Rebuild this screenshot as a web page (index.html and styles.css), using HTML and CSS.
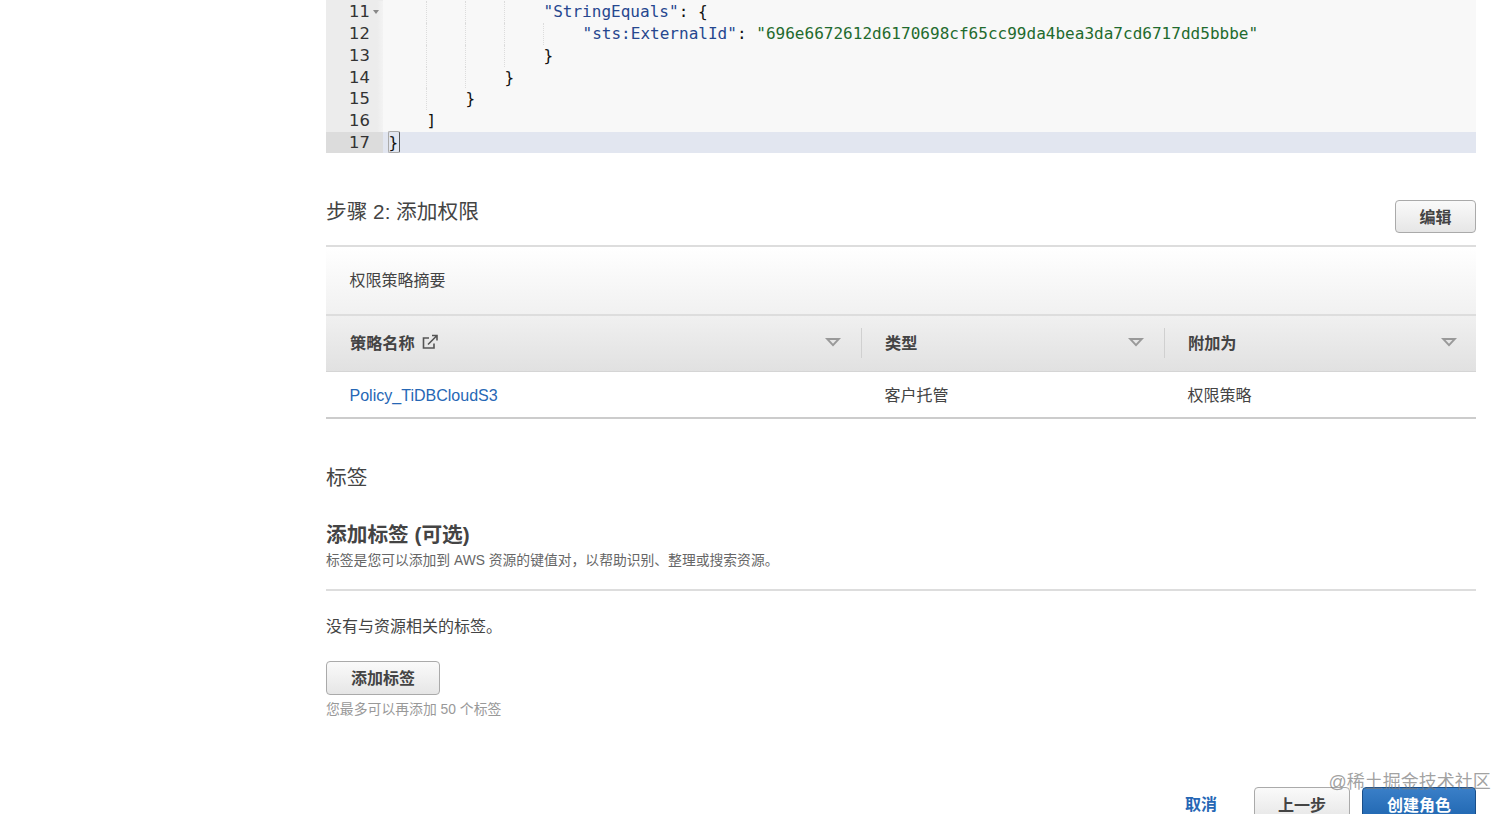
FILE: index.html
```html
<!DOCTYPE html>
<html lang="zh-CN">
<head>
<meta charset="utf-8">
<title>创建角色</title>
<link rel="stylesheet" href="styles.css">
</head>
<body>
<main class="page">
  <div class="editor">
    <div class="line"><div class="gutter">11<i class="fold"></i></div><div class="code"><span class="guide"></span><span class="guide"></span><span class="guide"></span><span class="skip"></span><span class="key">"StringEquals"</span>: {</div></div>
    <div class="line"><div class="gutter">12</div><div class="code"><span class="guide"></span><span class="guide"></span><span class="guide"></span><span class="guide"></span><span class="skip"></span><span class="key">"sts:ExternalId"</span>: <span class="str">"696e6672612d6170698cf65cc99da4bea3da7cd6717dd5bbbe"</span></div></div>
    <div class="line"><div class="gutter">13</div><div class="code"><span class="guide"></span><span class="guide"></span><span class="guide"></span><span class="skip"></span>}</div></div>
    <div class="line"><div class="gutter">14</div><div class="code"><span class="guide"></span><span class="guide"></span><span class="skip"></span>}</div></div>
    <div class="line"><div class="gutter">15</div><div class="code"><span class="guide"></span><span class="skip"></span>}</div></div>
    <div class="line"><div class="gutter">16</div><div class="code"><span class="skip"></span>]</div></div>
    <div class="line active"><div class="gutter">17</div><div class="code"><span class="bracket">}</span></div></div>
  </div>

  <div class="step-head">
    <h2 class="title">步骤 2: 添加权限</h2>
    <button class="btn btn-edit">编辑</button>
  </div>

  <section class="policy">
    <div class="summary">权限策略摘要</div>
    <div class="tr th">
      <div class="cell c1"><span>策略名称</span>
        <svg class="ext" width="16" height="16" viewBox="0 0 16 16" fill="none" stroke="#555" stroke-width="1.6"><path d="M12 9.5V14H1.5V4H7"/><path d="M6 10.5 14.5 2M10 1.5h5v5"/></svg>
        <svg class="sort" width="18" height="10" viewBox="0 0 18 10"><path d="M1 1h16L9 9.5z" fill="#999"/><path d="M5.5 3h7L9 6.8z" fill="#e6e6e6"/></svg>
      </div>
      <div class="cell c2"><span>类型</span>
        <svg class="sort" width="18" height="10" viewBox="0 0 18 10"><path d="M1 1h16L9 9.5z" fill="#999"/><path d="M5.5 3h7L9 6.8z" fill="#e6e6e6"/></svg>
      </div>
      <div class="cell c3"><span>附加为</span>
        <svg class="sort" width="18" height="10" viewBox="0 0 18 10"><path d="M1 1h16L9 9.5z" fill="#999"/><path d="M5.5 3h7L9 6.8z" fill="#e6e6e6"/></svg>
      </div>
    </div>
    <div class="tr td">
      <div class="cell c1"><a class="link" href="#">Policy_TiDBCloudS3</a></div>
      <div class="cell c2">客户托管</div>
      <div class="cell c3">权限策略</div>
    </div>
  </section>

  <h2 class="title tags-title">标签</h2>
  <h3 class="add-title">添加标签 (可选)</h3>
  <p class="desc">标签是您可以添加到 AWS 资源的键值对，以帮助识别、整理或搜索资源。</p>
  <hr class="rule">
  <p class="none">没有与资源相关的标签。</p>
  <button class="btn btn-add">添加标签</button>
  <p class="hint">您最多可以再添加 50 个标签</p>

  <footer class="actions">
    <a class="cancel" href="#">取消</a>
    <button class="btn btn-prev">上一步</button>
    <button class="btn btn-primary">创建角色</button>
  </footer>
</main>
<div class="watermark">@稀土掘金技术社区</div>
</body>
</html>
```

FILE: styles.css
```css
* { box-sizing: border-box; }
html, body { margin: 0; height: 814px; overflow: hidden; background: #fff; }
body {
  position: relative;
  font-family: "Liberation Sans", "Noto Sans CJK SC", sans-serif;
  color: #444;
  font-size: 16px;
}
.page { width: 1150px; margin-left: 326px; }

/* code editor */
.editor { background: #f8f8f8; height: 153px; padding-top: 1px; overflow: hidden; }
.line { display: flex; height: 21.85px; line-height: 21.85px; font-family: "DejaVu Sans Mono", monospace; font-size: 16.05px; }
.line:first-child .gutter { box-shadow: 0 -2px 0 #ececec; }
.gutter { width: 57px; flex: none; background: linear-gradient(90deg, #ececec 90%, #f3f3f3); color: #333; padding-left: 23px; position: relative; font-size: 16.4px; font-family: "DejaVu Sans", sans-serif; }
.fold { position: absolute; left: 47px; top: 9px; border: 3.5px solid transparent; border-top: 4px solid #888; border-bottom: 0; }
.code { flex: 1; padding-left: 4.5px; white-space: pre; color: #111; height: 100%; display: flex; }
.guide { width: 39px; flex: none; height: 100%; border-right: 1px dotted #dcdcdc; }
.skip { width: 39px; flex: none; }
.key { color: #26478f; }
.str { color: #1f6b2e; }
.active { background: #e2e6f0; }
.active .gutter { background: #dcdcdc; }
.bracket { display: block; width: 12px; height: 22px; border: 1px solid #aaa; border-right: 1.5px solid #555; border-radius: 2px; margin-top: -1px; line-height: 21px; }

/* headings */
.title { margin: 0; font-size: 20.7px; font-weight: 400; color: #444; line-height: 28px; }
.step-head { display: flex; justify-content: space-between; align-items: flex-start; margin-top: 47px; padding-bottom: 12px; border-bottom: 2px solid #ddd; }
.step-head .title { margin-top: -2px; }

/* buttons */
.btn {
  font: 700 16px "Liberation Sans", "Noto Sans CJK SC", sans-serif;
  color: #444;
  border: 1px solid #aaa;
  border-radius: 4px;
  background: linear-gradient(#fafafa, #e6e6e6);
  padding: 0;
}
.btn-edit { width: 81px; height: 33px; padding-bottom: 2px; }
.btn-add { display: block; width: 114px; height: 34px; margin-top: 22px; padding-bottom: 2px; }
.btn-prev { width: 96px; height: 34px; margin-left: 37px; }
.btn-primary { width: 114px; height: 34px; margin-left: 12px; color: #fff; background: linear-gradient(#3a7fc8, #1f66b0); border-color: #1a4f8a; }

/* policy table */
.summary { height: 67px; padding-left: 23.5px; line-height: 68px; background: linear-gradient(#fff, #f1f1f1); }
.tr { display: flex; }
.th { height: 58px; border-top: 2px solid #ddd; background: linear-gradient(#f0f0f0, #e1e1e1); font-weight: 700; font-size: 16.2px; align-items: center; padding-bottom: 2px; border-bottom: 1px solid #d5d5d5; }
.th .cell { height: 30px; padding-bottom: 2px; }
.td { height: 47px; border-bottom: 2px solid #ccc; }
.cell { display: flex; align-items: center; position: relative; padding-left: 23px; }
.td .cell { padding-bottom: 1px; }
.td .c1 { padding-bottom: 0; padding-top: 1px; padding-left: 23.5px; font-size: 16.05px; }
.c1 { width: 535px; }
.c2 { width: 303px; }
.c3 { width: 312px; }
.th .c1 { padding-left: 24px; }
.th .c2, .th .c3 { border-left: 1px solid #d0d0d0; }
.td .c2, .td .c3 { padding-left: 23.5px; }
.ext { margin-left: 7px; }
.sort { position: absolute; right: 19px; top: 9px; }
.link { color: #2667b5; text-decoration: none; }
.th .c3 .sort { right: 18px; }

/* tags */
.tags-title { margin-top: 45px; }
.add-title { margin: 29px 0 0; font-size: 20.7px; line-height: 28px; font-weight: 700; color: #444; }
.desc { margin: 2px 0 0; font-size: 13.8px; line-height: 20px; color: #666; }
.rule { margin: 18px 0 0; border: 0; border-top: 2px solid #ddd; }
.none { margin: 24px 0 0; line-height: 24px; }
.hint { margin: 4px 0 0; font-size: 13.85px; line-height: 20px; color: #999; }

/* footer */
.actions { display: flex; justify-content: flex-end; align-items: flex-start; margin-top: 68px; }
.cancel { color: #2667b5; font-weight: 700; text-decoration: none; line-height: 36px; }

.watermark { position: absolute; left: 1328.5px; top: 770px; font-size: 18px; line-height: 24px; color: rgba(120,120,120,.7); white-space: nowrap; }
```
